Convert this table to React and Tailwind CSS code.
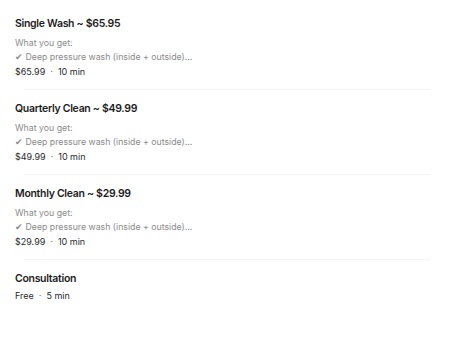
const services = [
  { name: 'Single Wash ~ $65.95', price: '$65.99', time: '10 min', details: true },
  { name: 'Quarterly Clean ~ $49.99', price: '$49.99', time: '10 min', details: true },
  { name: 'Monthly Clean ~ $29.99', price: '$29.99', time: '10 min', details: true },
  { name: 'Consultation', price: 'Free', time: '5 min', details: false },
];

function ServiceRow({ s }) {
  return (
    <div className="px-[15px] pt-[11px] pb-[10px]">
      <p className="text-[10.5px] font-semibold leading-[15px] tracking-[-0.3px] text-[#1c1c1c]">{s.name}</p>
      {s.details && (
        <div className="mt-[5px] text-[8.75px] leading-[14px] text-[#8a8a8a]">
          <p>What you get:</p>
          <p>✔ Deep pressure wash (inside + outside)...</p>
        </div>
      )}
      <p
        className={`flex items-center gap-[5px] text-[9px] leading-[14px] text-[#2a2a2a] ${
          s.details ? 'mt-[1px]' : 'mt-[3px]'
        }`}
      >
        <span>{s.price}</span>
        <span className="text-[#666]">·</span>
        <span>{s.time}</span>
      </p>
    </div>
  );
}

export default function App() {
  return (
    <div className="h-[340px] w-[450px] bg-white pt-[5px] font-['Inter',sans-serif] antialiased">
      {services.map((s, i) => (
        <div key={s.name}>
          <ServiceRow s={s} />
          {i < services.length - 1 && <div className="ml-[24px] mr-[20px] h-px bg-[#f4f4f4]" />}
        </div>
      ))}
    </div>
  );
}
